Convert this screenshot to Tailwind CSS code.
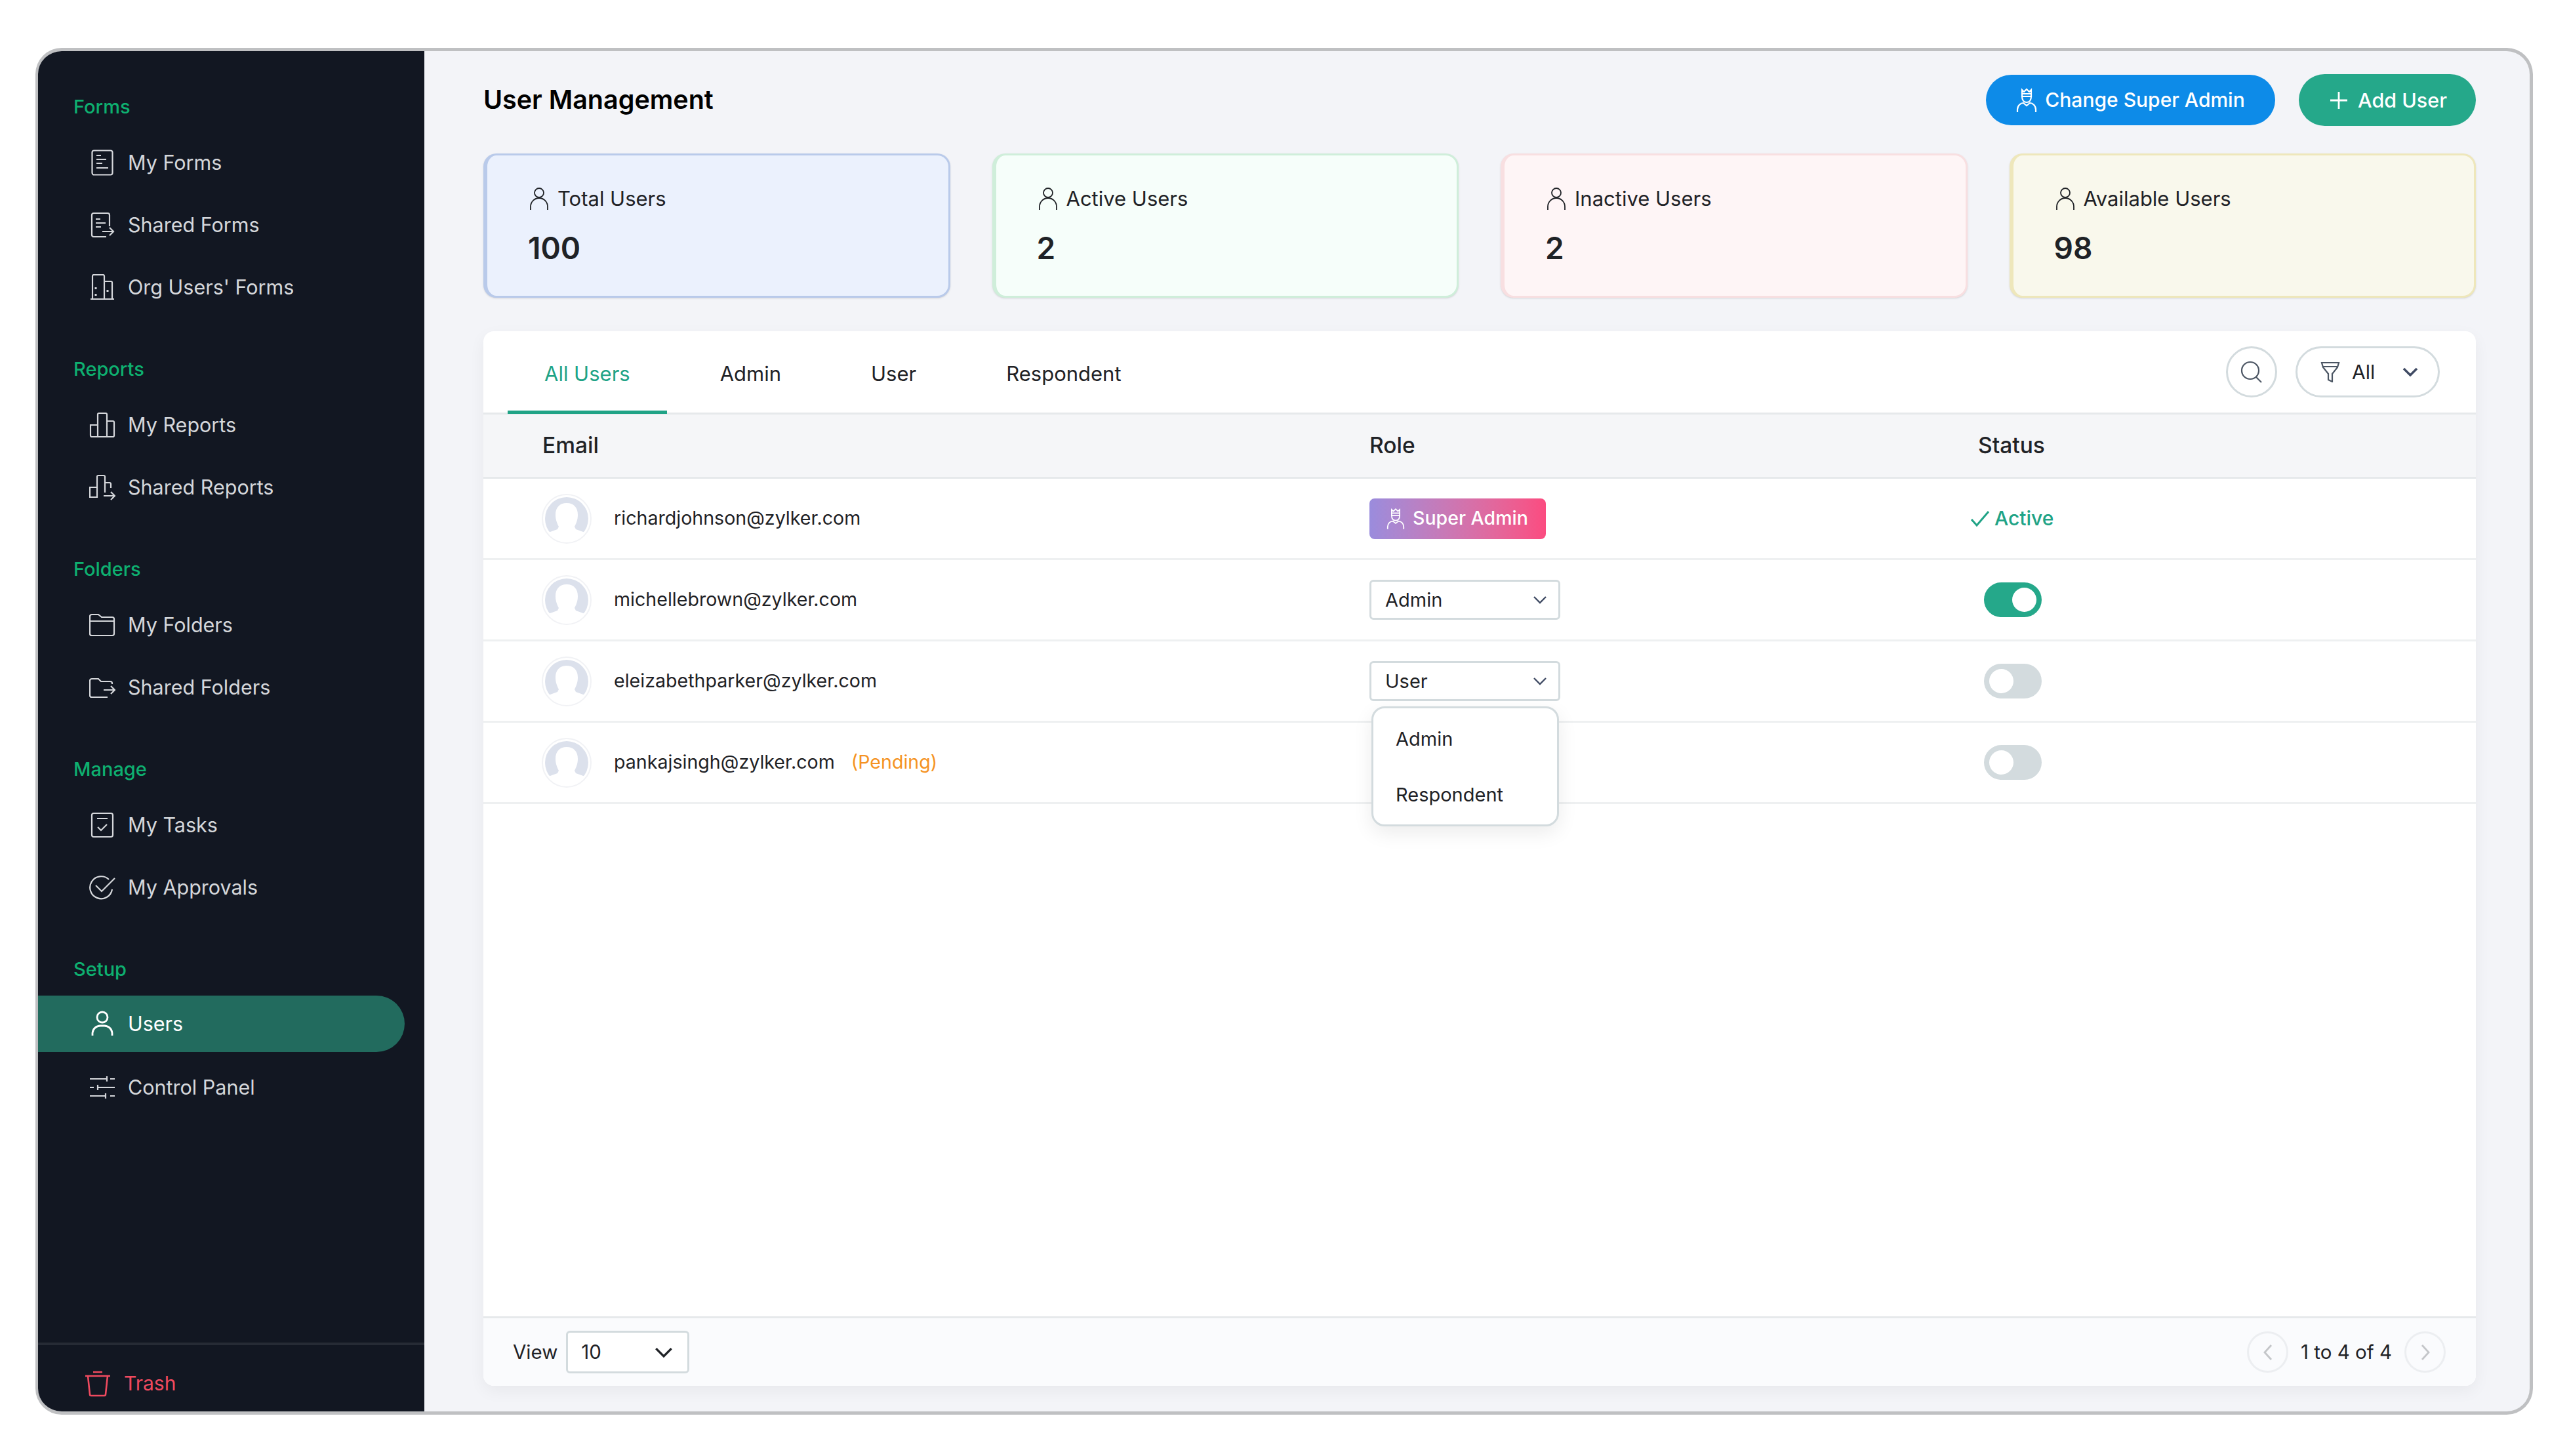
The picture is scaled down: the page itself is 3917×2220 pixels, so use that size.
<!DOCTYPE html>
<html lang="en">
<head>
    <meta charset="UTF-8">
    <title>User Management</title>
    <script src="https://cdn.jsdelivr.net/npm/@tailwindcss/browser@4"></script>
</head>
<body class="bg-white font-[Inter,sans-serif] text-[30px] text-[#1f2226] w-[3917px] h-[2220px] overflow-hidden">
<div class="ml-[54px] mt-[73px] w-[3808px] h-[2084px] flex rounded-[40px] border-[5px] border-l-[4px] border-[#bfc0c2] overflow-hidden bg-[#f3f4f8]">

    <!-- sidebar -->
    <aside class="w-[589px] shrink-0 bg-[#121722] flex flex-col text-[#d5d7db] text-[30.5px]">
        <nav class="flex-1 pt-[67px]">
            <div class="pl-[54px] h-[36px] leading-[36px] text-[29px] font-medium text-[#0eb070]">Forms</div>
            <div class="mt-[19px] flex flex-col">
                <a class="h-[95px] flex items-center pl-[78px] gap-[19px]">
                    <svg class="w-[40px] h-[40px]" viewBox="0 0 40 40" fill="none" stroke="currentColor" stroke-width="2.2"><rect x="4.5" y="1.5" width="31" height="37" rx="3"/><path d="M11 9h7M11 15h15M11 21h9M11 28h18"/></svg>
                    <span>My Forms</span>
                </a>
                <a class="h-[95px] flex items-center pl-[78px] gap-[19px]">
                    <svg class="w-[40px] h-[40px]" viewBox="0 0 40 40" fill="none" stroke="currentColor" stroke-width="2.2"><path d="M31 22V5a3 3 0 0 0-3-3H7a3 3 0 0 0-3 3v30a3 3 0 0 0 3 3h19"/><path d="M10 11h7M10 17h15M10 23h8M20 30h17M31 24l6 6-6 6"/></svg>
                    <span>Shared Forms</span>
                </a>
                <a class="h-[95px] flex items-center pl-[78px] gap-[19px]">
                    <svg class="w-[40px] h-[40px]" viewBox="0 0 40 40" fill="none" stroke="currentColor" stroke-width="2.2"><path d="M2 38h36M5 38V3a2 2 0 0 1 2-2h14a2 2 0 0 1 2 2v35M23 11h10a2 2 0 0 1 2 2v25"/><path d="M10 20v3M10 30v3M28 24v3" stroke-width="3"/></svg>
                    <span>Org Users' Forms</span>
                </a>
            </div>

            <div class="mt-[60px] pl-[54px] h-[36px] leading-[36px] text-[29px] font-medium text-[#0eb070]">Reports</div>
            <div class="mt-[19px] flex flex-col">
                <a class="h-[95px] flex items-center pl-[78px] gap-[19px]">
                    <svg class="w-[40px] h-[40px]" viewBox="0 0 40 40" fill="none" stroke="currentColor" stroke-width="2.2"><path d="M2 20h11v18H4a2 2 0 0 1-2-2zM13 38V4a2 2 0 0 1 2-2h10a2 2 0 0 1 2 2v34zM27 14h9a2 2 0 0 1 2 2v20a2 2 0 0 1-2 2h-9"/></svg>
                    <span>My Reports</span>
                </a>
                <a class="h-[95px] flex items-center pl-[78px] gap-[19px]">
                    <svg class="w-[40px] h-[40px]" viewBox="0 0 40 40" fill="none" stroke="currentColor" stroke-width="2.2"><path d="M1 20h11v15H1zM12 35V4a2 2 0 0 1 2-2h8a2 2 0 0 1 2 2v24M24 13h7a2 2 0 0 1 2 2v6M22 33h17M33 27l6 6-6 6"/></svg>
                    <span>Shared Reports</span>
                </a>
            </div>

            <div class="mt-[60px] pl-[54px] h-[36px] leading-[36px] text-[29px] font-medium text-[#0eb070]">Folders</div>
            <div class="mt-[19px] flex flex-col">
                <a class="h-[95px] flex items-center pl-[78px] gap-[19px]">
                    <svg class="w-[40px] h-[40px]" viewBox="0 0 40 40" fill="none" stroke="currentColor" stroke-width="2.2"><path d="M1 7a3 3 0 0 1 3-3h10l5 4h16a3 3 0 0 1 3 3v22a3 3 0 0 1-3 3H4a3 3 0 0 1-3-3z"/><path d="M1 14h37"/></svg>
                    <span>My Folders</span>
                </a>
                <a class="h-[95px] flex items-center pl-[78px] gap-[19px]">
                    <svg class="w-[40px] h-[40px]" viewBox="0 0 40 40" fill="none" stroke="currentColor" stroke-width="2.2"><path d="M35 15v-1a3 3 0 0 0-3-3H18l-4-4H4a3 3 0 0 0-3 3v22a3 3 0 0 0 3 3h24"/><path d="M22 24h17M33 18l6 6-6 6"/></svg>
                    <span>Shared Folders</span>
                </a>
            </div>

            <div class="mt-[60px] pl-[54px] h-[36px] leading-[36px] text-[29px] font-medium text-[#0eb070]">Manage</div>
            <div class="mt-[19px] flex flex-col">
                <a class="h-[95px] flex items-center pl-[78px] gap-[19px]">
                    <svg class="w-[40px] h-[40px]" viewBox="0 0 40 40" fill="none" stroke="currentColor" stroke-width="2.2"><rect x="4" y="2" width="32" height="36" rx="3"/><path d="M12 10h16M13 23l5 5 9-9"/></svg>
                    <span>My Tasks</span>
                </a>
                <a class="h-[95px] flex items-center pl-[78px] gap-[19px]">
                    <svg class="w-[40px] h-[40px]" viewBox="0 0 40 40" fill="none" stroke="currentColor" stroke-width="2.2"><path d="M30 8a17 17 0 1 0 5 15"/><path d="M10 17l9 9L39 6"/></svg>
                    <span>My Approvals</span>
                </a>
            </div>

            <div class="mt-[60px] pl-[54px] h-[36px] leading-[36px] text-[29px] font-medium text-[#0eb070]">Setup</div>
            <div class="mt-[19px] flex flex-col">
                <a class="h-[86px] w-[559px] mt-[3px] flex items-center pl-[78px] gap-[19px] bg-[#226b5e] rounded-r-full text-white">
                    <svg class="w-[40px] h-[40px]" viewBox="0 0 40 40" fill="none" stroke="currentColor" stroke-width="2.8"><circle cx="20" cy="10" r="8"/><path d="M5 38v-4a12 12 0 0 1 12-11h6a12 12 0 0 1 12 11v4"/></svg>
                    <span>Users</span>
                </a>
                <a class="h-[95px] mt-[6px] flex items-center pl-[78px] gap-[19px]">
                    <svg class="w-[40px] h-[40px]" viewBox="0 0 40 40" fill="none" stroke="currentColor" stroke-width="2.2"><path d="M1 7h26M32 7h7M27 3v8M1 20h6M13 20h26M13 16v8M1 33h24M32 33h7M25 29v8"/></svg>
                    <span>Control Panel</span>
                </a>
            </div>
        </nav>
        <div class="h-[105px] border-t-[4px] border-[#262b35] flex items-center pt-[16px] pl-[71px] gap-[20px] text-[#ef4a5f] text-[30px]">
            <svg class="w-[40px] h-[40px]" viewBox="0 0 40 40" fill="none" stroke="currentColor" stroke-width="2.6"><path d="M1 8h38M13 2h14M5 8l3 28a2 2 0 0 0 2 2h20a2 2 0 0 0 2-2l3-28"/></svg>
            <span>Trash</span>
        </div>
    </aside>

    <!-- main -->
    <main class="flex-1 flex flex-col pl-[90px] pr-[82px] pt-[35px] pb-[39px] min-w-0">
        <header class="h-[79px] flex items-center justify-between shrink-0">
            <h1 class="text-[39.5px] font-semibold text-black">User Management</h1>
            <div class="flex items-center gap-[36px]">
                <button class="h-[77px] w-[441px] rounded-full bg-[#0d8be8] text-white flex items-center justify-center gap-[12px] font-medium">
                    <svg class="w-[32px] h-[38px]" viewBox="0 0 32 38" fill="none" stroke="currentColor" stroke-width="2.2"><path d="M9 3l3 3 4-4 4 4 3-3v10H9zM9 9h14"/><path d="M9 13c0 6 3 9 7 9s7-3 7-9"/><path d="M2 37v-4c0-6 5-10 9-10l5 4 5-4c4 0 9 4 9 10v4"/></svg>
                    <span>Change Super Admin</span>
                </button>
                <button class="h-[79px] w-[270px] pl-[3px] rounded-full bg-[#25a88a] text-white flex items-center justify-center gap-[15px] font-medium text-[30.5px]">
                    <svg class="w-[28px] h-[28px]" viewBox="0 0 28 28" fill="none" stroke="currentColor" stroke-width="2.8"><path d="M14 1v26M1 14h26"/></svg>
                    <span>Add User</span>
                </button>
            </div>
        </header>

        <section class="mt-[42px] grid grid-cols-4 gap-[64px] h-[220px] shrink-0 text-[31px]">
            <div class="rounded-[20px] border-[3px] border-l-[6px] border-[#b9caea] bg-[#ebf1fd] pl-[65px] pt-[49px] shadow-sm">
                <div class="flex items-center gap-[14px] h-[34px]">
                    <svg class="w-[28px] h-[34px]" viewBox="0 0 28 34" fill="none" stroke="currentColor" stroke-width="1.8"><circle cx="14" cy="8" r="7"/><path d="M1 34v-5a12 12 0 0 1 26 0v5"/></svg>
                    <span>Total Users</span>
                </div>
                <div class="mt-[30px] -ml-[3px] text-[46px] leading-[56px] font-semibold">100</div>
            </div>
            <div class="rounded-[20px] border-[3px] border-l-[6px] border-[#cfeeda] bg-[#f6fefa] pl-[65px] pt-[49px] shadow-sm">
                <div class="flex items-center gap-[14px] h-[34px]">
                    <svg class="w-[28px] h-[34px]" viewBox="0 0 28 34" fill="none" stroke="currentColor" stroke-width="1.8"><circle cx="14" cy="8" r="7"/><path d="M1 34v-5a12 12 0 0 1 26 0v5"/></svg>
                    <span>Active Users</span>
                </div>
                <div class="mt-[30px] -ml-[3px] text-[46px] leading-[56px] font-semibold">2</div>
            </div>
            <div class="rounded-[20px] border-[3px] border-l-[6px] border-[#f8dfe1] bg-[#fef5f6] pl-[65px] pt-[49px] shadow-sm">
                <div class="flex items-center gap-[14px] h-[34px]">
                    <svg class="w-[28px] h-[34px]" viewBox="0 0 28 34" fill="none" stroke="currentColor" stroke-width="1.8"><circle cx="14" cy="8" r="7"/><path d="M1 34v-5a12 12 0 0 1 26 0v5"/></svg>
                    <span>Inactive Users</span>
                </div>
                <div class="mt-[30px] -ml-[3px] text-[46px] leading-[56px] font-semibold">2</div>
            </div>
            <div class="rounded-[20px] border-[3px] border-l-[6px] border-[#eee7bb] bg-[#f9f8ec] pl-[65px] pt-[49px] shadow-sm">
                <div class="flex items-center gap-[14px] h-[34px]">
                    <svg class="w-[28px] h-[34px]" viewBox="0 0 28 34" fill="none" stroke="currentColor" stroke-width="1.8"><circle cx="14" cy="8" r="7"/><path d="M1 34v-5a12 12 0 0 1 26 0v5"/></svg>
                    <span>Available Users</span>
                </div>
                <div class="mt-[30px] -ml-[3px] text-[46px] leading-[56px] font-semibold">98</div>
            </div>
        </section>

        <section class="mt-[51px] flex-1 min-h-0 flex flex-col bg-white rounded-[16px] shadow-[0_8px_24px_rgba(0,0,0,0.05)]">
            <div class="h-[127px] shrink-0 flex items-end justify-between pl-[37px] pr-[55px] border-b-[3px] border-[#e6e9eb] text-[31px]">
                <div class="flex gap-[25px]">
                    <a class="h-[124px] px-[56px] pt-[8px] -mb-[2px] flex items-center border-b-[5px] border-[#20a386] text-[#20a386]">All Users</a>
                    <a class="h-[124px] px-[56px] pt-[8px] -mb-[2px] flex items-center border-b-[5px] border-transparent">Admin</a>
                    <a class="h-[124px] px-[56px] pt-[8px] -mb-[2px] flex items-center border-b-[5px] border-transparent">User</a>
                    <a class="h-[124px] px-[56px] pt-[8px] -mb-[2px] flex items-center border-b-[5px] border-transparent">Respondent</a>
                </div>
                <div class="self-center flex items-center gap-[28px] text-[30px]">
                    <button class="w-[78px] h-[78px] rounded-full border-[3px] border-[#d3dbde] flex items-center justify-center">
                        <svg class="w-[34px] h-[34px] text-[#4b5563]" viewBox="0 0 34 34" fill="none" stroke="currentColor" stroke-width="2.2"><circle cx="15" cy="15" r="13"/><path d="M24 25l8 8"/></svg>
                    </button>
                    <button class="w-[220px] h-[78px] rounded-full border-[3px] border-[#d3dbde] flex items-center pl-[35px] gap-[18px]">
                        <svg class="w-[30px] h-[32px] text-[#4b5563]" viewBox="0 0 30 32" fill="none" stroke="currentColor" stroke-width="2.2"><path d="M2 2h26l-2 7-8 10v12l-6-3V19L4 9zM3 8h24"/></svg>
                        <span>All</span>
                        <svg class="ml-[24px] w-[24px] h-[14px] text-[#3f4a63]" viewBox="0 0 24 14" fill="none" stroke="currentColor" stroke-width="3.4"><path d="M2 2l10 10L22 2"/></svg>
                    </button>
                </div>
            </div>

            <div class="h-[98px] shrink-0 grid grid-cols-[1351px_928px_1fr] items-center bg-[#f5f6f8] border-b-[3px] border-[#e6e9eb] font-medium text-[33.5px]">
                <div class="pl-[90px]">Email</div>
                <div>Role</div>
                <div>Status</div>
            </div>

            <div class="flex-1 min-h-0 relative text-[29px]">
                <div class="h-[124px] grid grid-cols-[1351px_928px_1fr] items-center border-b-[3px] border-[#eef0f1]">
                    <div class="pl-[89px] flex items-center gap-[34px] text-[28.6px]">
                        <svg class="w-[76px] h-[76px]" viewBox="0 0 76 76"><circle cx="38" cy="38" r="33" fill="#dce1ec"/><path d="M38 14C27 14 21 21 21 32C21 40 24 46 26 50L24 54L10 59L6 76H70L66 59L52 54L50 50C52 46 55 40 55 32C55 21 49 14 38 14z" fill="#fff"/><circle cx="38" cy="38" r="37" fill="none" stroke="#f1f2f5" stroke-width="2"/></svg>
                        <span>richardjohnson@zylker.com</span>
                    </div>
                    <div>
                        <span class="w-[269px] h-[62px] rounded-[8px] bg-gradient-to-r from-[#9a8cdd] to-[#fb4b80] text-white font-medium text-[28.5px] flex items-center pl-[26px] gap-[12px]">
                            <svg class="w-[28px] h-[34px]" viewBox="0 0 32 38" fill="none" stroke="currentColor" stroke-width="2"><path d="M9 3l3 3 4-4 4 4 3-3v10H9zM9 9h14"/><path d="M9 13c0 6 3 9 7 9s7-3 7-9"/><path d="M2 37v-4c0-6 5-10 9-10l5 4 5-4c4 0 9 4 9 10v4"/></svg>
                            <span>Super Admin</span>
                        </span>
                    </div>
                    <div class="-ml-[12px] flex items-center gap-[7px] text-[#20a386] font-medium text-[30px]">
                        <svg class="w-[30px] h-[26px]" viewBox="0 0 30 26" fill="none" stroke="currentColor" stroke-width="3"><path d="M2 14l8 9L28 2"/></svg>
                        <span>Active</span>
                    </div>
                </div>
                <div class="h-[124px] grid grid-cols-[1351px_928px_1fr] items-center border-b-[3px] border-[#eef0f1]">
                    <div class="pl-[89px] flex items-center gap-[34px] text-[28.6px]">
                        <svg class="w-[76px] h-[76px]" viewBox="0 0 76 76"><circle cx="38" cy="38" r="33" fill="#dce1ec"/><path d="M38 14C27 14 21 21 21 32C21 40 24 46 26 50L24 54L10 59L6 76H70L66 59L52 54L50 50C52 46 55 40 55 32C55 21 49 14 38 14z" fill="#fff"/><circle cx="38" cy="38" r="37" fill="none" stroke="#f1f2f5" stroke-width="2"/></svg>
                        <span>michellebrown@zylker.com</span>
                    </div>
                    <div>
                        <div class="w-[291px] h-[61px] rounded-[6px] border-[3px] border-[#d3dbde] flex items-center justify-between pl-[21px] pr-[17px]">
                            <span>Admin</span>
                            <svg class="w-[22px] h-[13px] text-[#3f4a63]" viewBox="0 0 22 13" fill="none" stroke="currentColor" stroke-width="2.4"><path d="M2 2l9 9 9-9"/></svg>
                        </div>
                    </div>
                    <div class="pl-[9px]">
                        <div class="w-[88px] h-[53px] rounded-full bg-[#25a88a] flex items-center justify-end px-[8px]"><div class="w-[37px] h-[37px] rounded-full bg-white"></div></div>
                    </div>
                </div>
                <div class="h-[124px] grid grid-cols-[1351px_928px_1fr] items-center border-b-[3px] border-[#eef0f1]">
                    <div class="pl-[89px] flex items-center gap-[34px] text-[28.6px]">
                        <svg class="w-[76px] h-[76px]" viewBox="0 0 76 76"><circle cx="38" cy="38" r="33" fill="#dce1ec"/><path d="M38 14C27 14 21 21 21 32C21 40 24 46 26 50L24 54L10 59L6 76H70L66 59L52 54L50 50C52 46 55 40 55 32C55 21 49 14 38 14z" fill="#fff"/><circle cx="38" cy="38" r="37" fill="none" stroke="#f1f2f5" stroke-width="2"/></svg>
                        <span>eleizabethparker@zylker.com</span>
                    </div>
                    <div>
                        <div class="w-[291px] h-[61px] rounded-[6px] border-[3px] border-[#d3dbde] flex items-center justify-between pl-[21px] pr-[17px]">
                            <span>User</span>
                            <svg class="w-[22px] h-[13px] text-[#3f4a63]" viewBox="0 0 22 13" fill="none" stroke="currentColor" stroke-width="2.4"><path d="M2 2l9 9 9-9"/></svg>
                        </div>
                    </div>
                    <div class="pl-[9px]">
                        <div class="w-[88px] h-[53px] rounded-full bg-[#d3dbde] flex items-center px-[8px]"><div class="w-[37px] h-[37px] rounded-full bg-white"></div></div>
                    </div>
                </div>
                <div class="h-[124px] grid grid-cols-[1351px_928px_1fr] items-center border-b-[3px] border-[#eef0f1]">
                    <div class="pl-[89px] flex items-center gap-[34px] text-[28.6px]">
                        <svg class="w-[76px] h-[76px]" viewBox="0 0 76 76"><circle cx="38" cy="38" r="33" fill="#dce1ec"/><path d="M38 14C27 14 21 21 21 32C21 40 24 46 26 50L24 54L10 59L6 76H70L66 59L52 54L50 50C52 46 55 40 55 32C55 21 49 14 38 14z" fill="#fff"/><circle cx="38" cy="38" r="37" fill="none" stroke="#f1f2f5" stroke-width="2"/></svg>
                        <span>pankajsingh@zylker.com</span>
                        <span class="-ml-[9px] text-[#f59323]">(Pending)</span>
                    </div>
                    <div></div>
                    <div class="pl-[9px]">
                        <div class="w-[88px] h-[53px] rounded-full bg-[#d3dbde] flex items-center px-[8px]"><div class="w-[37px] h-[37px] rounded-full bg-white"></div></div>
                    </div>
                </div>

                <!-- role dropdown menu -->
                <div class="absolute left-[1354px] top-[347px] w-[286px] h-[183px] rounded-[20px] border-[3px] border-[#d3dbde] bg-white shadow-[0_10px_30px_rgba(0,0,0,0.08)] pl-[34px] flex flex-col">
                    <div class="mt-[29px] h-[36px] leading-[36px]">Admin</div>
                    <div class="mt-[49px] h-[36px] leading-[36px]">Respondent</div>
                </div>
            </div>

            <footer class="h-[106px] shrink-0 flex items-center justify-between bg-[#fafbfd] border-t-[3px] border-[#e6e9eb] rounded-b-[16px] pl-[45px] pr-[46px] text-[29.5px]">
                <div class="flex items-center gap-[13px]">
                    <span>View</span>
                    <div class="w-[188px] h-[65px] rounded-[6px] border-[3px] border-[#d3dbde] bg-white flex items-center justify-between pl-[20px] pr-[22px]">
                        <span>10</span>
                        <svg class="w-[28px] h-[16px]" viewBox="0 0 26 15" fill="none" stroke="currentColor" stroke-width="3.2"><path d="M2 2l11 11L24 2"/></svg>
                    </div>
                </div>
                <div class="flex items-center gap-[19px]">
                    <button class="w-[63px] h-[63px] rounded-full border-[3px] border-[#eceef1] flex items-center justify-center">
                        <svg class="w-[14px] h-[26px] text-[#c4c6c9]" viewBox="0 0 14 26" fill="none" stroke="currentColor" stroke-width="2.8"><path d="M12 2L2 13l10 11"/></svg>
                    </button>
                    <span>1 to 4 of 4</span>
                    <button class="w-[63px] h-[63px] rounded-full border-[3px] border-[#eceef1] flex items-center justify-center">
                        <svg class="w-[14px] h-[26px] text-[#c4c6c9]" viewBox="0 0 14 26" fill="none" stroke="currentColor" stroke-width="2.8"><path d="M2 2l10 11L2 24"/></svg>
                    </button>
                </div>
            </footer>
        </section>
    </main>
</div>
</body>
</html>
